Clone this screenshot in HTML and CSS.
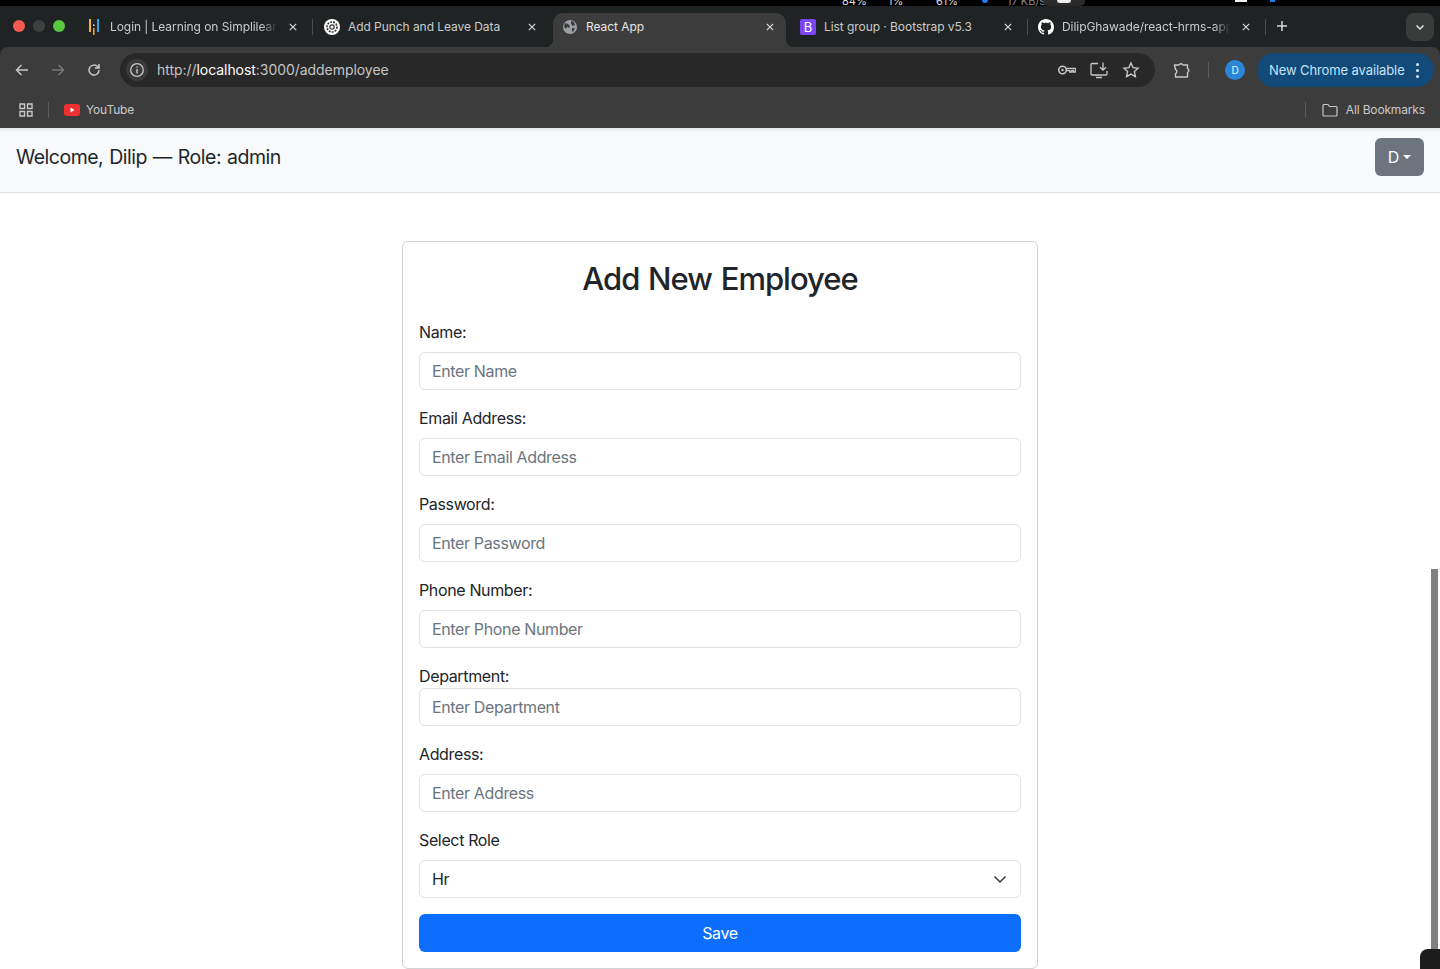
FILE: index.html
```html
<!DOCTYPE html>
<html lang="en">
<head>
    <meta charset="UTF-8">
    <meta name="viewport" content="width=device-width, initial-scale=1.0">
    <title>React App</title>
    <link rel="stylesheet" href="styles.css">
</head>
<body>
    <div class="menubar">
        <span class="mb-item mb-cpu">84%</span>
        <span class="mb-item mb-gpu">1%</span>
        <span class="mb-item mb-mem">61%</span>
        <span class="mb-dot"></span>
        <span class="mb-item mb-net">17 KB/s</span>
        <span class="mb-chip"><i></i></span>
        <span class="mb-bar"></span>
        <span class="mb-blue"></span>
    </div>

    <div class="chrome">
        <div class="tabstrip">
            <div class="traffic">
                <span class="light red"></span>
                <span class="light grey"></span>
                <span class="light green"></span>
            </div>
            <div class="tab tab-login">
                <svg class="favicon" viewBox="0 0 16 16"><rect x="3" y="0" width="2" height="13" fill="#f5b041"/><rect x="7" y="5.5" width="1.5" height="1.5" fill="#e8e8e8"/><rect x="7" y="9" width="1.5" height="7" fill="#f5a623"/><rect x="11" y="0" width="2" height="13" fill="#2ea3e0"/></svg>
                <span class="tab-title fade">Login | Learning on Simplilearn</span>
                <svg class="tab-close" viewBox="0 0 10 10"><path d="M1 1l8 8M9 1l-8 8"/></svg>
            </div>
            <span class="tab-sep"></span>
            <div class="tab tab-punch">
                <svg class="favicon" viewBox="0 0 16 16"><circle cx="8" cy="8" r="8" fill="#fff"/><circle cx="8" cy="8" r="5" fill="none" stroke="#333" stroke-width="1.6" stroke-dasharray="2 1"/><circle cx="8" cy="8" r="2.2" fill="none" stroke="#333" stroke-width="1.2"/></svg>
                <span class="tab-title">Add Punch and Leave Data</span>
                <svg class="tab-close" viewBox="0 0 10 10"><path d="M1 1l8 8M9 1l-8 8"/></svg>
            </div>
            <div class="tab tab-active">
                <svg class="favicon" viewBox="0 0 16 16"><circle cx="8" cy="8" r="7" fill="#9aa0a6"/><path d="M3 4l3 1 2 2-1 2-2-1-1 2-2-2z M9 2l3 1 1 3-2 1-2-2z M10 9l3 0-2 4-1-1z" fill="#3c3c3c"/></svg>
                <span class="tab-title">React App</span>
                <svg class="tab-close" viewBox="0 0 10 10"><path d="M1 1l8 8M9 1l-8 8"/></svg>
            </div>
            <div class="tab tab-bootstrap">
                <span class="favicon bs-icon">B</span>
                <span class="tab-title">List group · Bootstrap v5.3</span>
                <svg class="tab-close" viewBox="0 0 10 10"><path d="M1 1l8 8M9 1l-8 8"/></svg>
            </div>
            <span class="tab-sep"></span>
            <div class="tab tab-github">
                <svg class="favicon" viewBox="0 0 16 16"><path fill="#fff" d="M8 0C3.58 0 0 3.58 0 8c0 3.54 2.29 6.53 5.47 7.59.4.07.55-.17.55-.38 0-.19-.01-.82-.01-1.49-2.01.37-2.53-.49-2.69-.94-.09-.23-.48-.94-.82-1.13-.28-.15-.68-.52-.01-.53.63-.01 1.08.58 1.23.82.72 1.21 1.87.87 2.33.66.07-.52.28-.87.51-1.07-1.78-.2-3.64-.89-3.64-3.95 0-.87.31-1.59.82-2.15-.08-.2-.36-1.02.08-2.12 0 0 .67-.21 2.2.82.64-.18 1.32-.27 2-.27s1.36.09 2 .27c1.53-1.04 2.2-.82 2.2-.82.44 1.1.16 1.92.08 2.12.51.56.82 1.27.82 2.15 0 3.07-1.87 3.75-3.65 3.95.29.25.54.73.54 1.48 0 1.07-.01 1.93-.01 2.2 0 .21.15.46.55.38A8.01 8.01 0 0 0 16 8c0-4.42-3.58-8-8-8z"/></svg>
                <span class="tab-title fade">DilipGhawade/react-hrms-app</span>
                <svg class="tab-close" viewBox="0 0 10 10"><path d="M1 1l8 8M9 1l-8 8"/></svg>
            </div>
            <span class="tab-sep"></span>
            <span class="new-tab">
                <svg viewBox="0 0 12 12" width="12" height="12"><path d="M6 1v10M1 6h10" stroke="#d8d8d8" stroke-width="1.5"/></svg>
            </span>
            <span class="tab-menu">
                <svg viewBox="0 0 12 12" width="12" height="12"><path d="M2.5 4.5L6 8l3.5-3.5" fill="none" stroke="#e3e3e3" stroke-width="1.5"/></svg>
            </span>
        </div>

        <div class="toolbar">
            <svg class="nav-icon" viewBox="0 0 16 16"><path d="M14 8H3M7.5 3L2.5 8l5 5" fill="none" stroke="#c7c7c7" stroke-width="1.5"/></svg>
            <svg class="nav-icon" viewBox="0 0 16 16"><path d="M2 8h11M8.5 3l5 5-5 5" fill="none" stroke="#777" stroke-width="1.5"/></svg>
            <svg class="nav-icon" viewBox="0 0 16 16"><path d="M13 8a5 5 0 1 1-1.5-3.5L13 6M13 2v4H9" fill="none" stroke="#c7c7c7" stroke-width="1.5"/></svg>
            <div class="omnibox">
                <span class="site-info">
                    <svg viewBox="0 0 16 16" width="16" height="16"><circle cx="8" cy="8" r="6.3" fill="none" stroke="#c7c7c7" stroke-width="1.3"/><path d="M8 7v4.4M8 4.4v1.4" stroke="#c7c7c7" stroke-width="1.4"/></svg>
                </span>
                <span class="url"><span class="url-dim">http://</span>localhost<span class="url-dim">:3000/addemployee</span></span>
                <svg class="omni-icon" viewBox="0 0 20 20"><circle cx="5.5" cy="10" r="3.8" fill="none" stroke="#c7c7c7" stroke-width="1.5"/><circle cx="5.5" cy="10" r="1.2" fill="#c7c7c7"/><path d="M9.3 8.3h9v3.7h-2v-1.5h-1.5V12h-2v-1.5H9.3" fill="none" stroke="#c7c7c7" stroke-width="1.3"/></svg>
                <svg class="omni-icon" viewBox="0 0 20 20"><path d="M9 3.5H3a1 1 0 0 0-1 1v9.5a1 1 0 0 0 1 1h14a1 1 0 0 0 1-1v-3M7 17.5h6M14 2.5v7.5M11 7.2l3 3 3-3" fill="none" stroke="#c7c7c7" stroke-width="1.3"/></svg>
                <svg class="omni-icon" viewBox="0 0 20 20"><path d="M10 3l2.1 4.6 5 .6-3.7 3.4 1 5-4.4-2.5-4.4 2.5 1-5-3.7-3.4 5-.6z" fill="none" stroke="#c7c7c7" stroke-width="1.4"/></svg>
            </div>
            <svg class="ext-icon" viewBox="0 0 20 20"><path d="M2.5 5H7a2.2 2.2 0 0 1 4 0h4.5v3.5a2 2 0 0 1 0 3.8V17H3.5v-3.3a2.3 2.3 0 0 0 0-4.2z" fill="none" stroke="#c7c7c7" stroke-width="1.4" stroke-linejoin="round"/></svg>
            <span class="tool-sep"></span>
            <span class="avatar">D</span>
            <div class="update-pill">
                <span>New Chrome available</span>
                <span class="dots"><i></i><i></i><i></i></span>
            </div>
        </div>

        <div class="bookmarks">
            <svg class="apps" viewBox="0 0 14 14"><path d="M1 1h4.5v4.5H1zM8.5 1H13v4.5H8.5zM1 8.5h4.5V13H1zM8.5 8.5H13V13H8.5z" fill="none" stroke="#c7c7c7" stroke-width="1.4"/></svg>
            <span class="tool-sep bm-sep"></span>
            <svg class="yt" viewBox="0 0 16 12"><rect width="16" height="12" rx="3" fill="#ef3030"/><path d="M6.5 3.5v5l4-2.5z" fill="#fff"/></svg>
            <span class="bm-label">YouTube</span>
            <span class="bm-spacer"></span>
            <span class="tool-sep bm-sep bm-sep-end"></span>
            <svg class="folder" viewBox="0 0 16 14"><path d="M1 2.5a1 1 0 0 1 1-1h4l1.5 2H14a1 1 0 0 1 1 1V12a1 1 0 0 1-1 1H2a1 1 0 0 1-1-1z" fill="none" stroke="#c7c7c7" stroke-width="1.2"/></svg>
            <span class="bm-label">All Bookmarks</span>
        </div>
    </div>

    <nav class="navbar">
        <span class="brand">Welcome, Dilip — Role: admin</span>
        <button class="user-btn" type="button">D<span class="caret"></span></button>
    </nav>

    <main class="content">
        <form class="card">
            <h2>Add New Employee</h2>
            <div class="field">
                <label>Name:</label>
                <input type="text" placeholder="Enter Name">
            </div>
            <div class="field">
                <label>Email Address:</label>
                <input type="text" placeholder="Enter Email Address">
            </div>
            <div class="field">
                <label>Password:</label>
                <input type="text" placeholder="Enter Password">
            </div>
            <div class="field">
                <label>Phone Number:</label>
                <input type="text" placeholder="Enter Phone Number">
            </div>
            <div class="field tight">
                <label>Department:</label>
                <input type="text" placeholder="Enter Department">
            </div>
            <div class="field">
                <label>Address:</label>
                <input type="text" placeholder="Enter Address">
            </div>
            <div class="field">
                <label>Select Role</label>
                <div class="select-box">
                    <span>Hr</span>
                    <svg viewBox="0 0 16 16" width="16" height="16"><path d="M2.5 5.5L8 11l5.5-5.5" fill="none" stroke="#343a40" stroke-width="1.5"/></svg>
                </div>
            </div>
            <button class="save-btn" type="button">Save</button>
        </form>
    </main>

    <div class="scroll-thumb"></div>
    <div class="corner-chip"></div>
</body>
</html>
```

FILE: styles.css
```css
* {
    box-sizing: border-box;
}
body {
    margin: 0;
    height: 969px;
    overflow: hidden;
    background-color: #fff;
    color: #212529;
    font-family: Inter, "Liberation Sans", sans-serif;
    font-size: 16px;
    letter-spacing: -0.36px;
}

/* macOS menu bar, only its lower edge is in the picture */
.menubar {
    display: flex;
    align-items: flex-end;
    height: 6px;
    overflow: hidden;
    background-color: #000;
    color: #ddd;
    font-size: 11px;
    line-height: 9px;
    letter-spacing: 0;
}
.mb-item {
    flex: none;
}
.mb-cpu { margin-left: 842px; width: 25px; }
.mb-gpu { margin-left: 21px; width: 15px; }
.mb-mem { margin-left: 33px; width: 22px; }
.mb-dot {
    width: 6px;
    height: 3px;
    margin: 0 0 3px 24px;
    background-color: #1f7cf2;
    border-radius: 0 0 3px 3px;
}
.mb-net { margin-left: 19px; width: 30px; white-space: nowrap; color: #888; }
.mb-chip {
    display: flex;
    justify-content: center;
    width: 42px;
    height: 6px;
    margin-left: 6px;
    background-color: #2a2a2a;
    border-radius: 0 0 5px 5px;
}
.mb-chip i {
    width: 14px;
    height: 3px;
    background-color: #eee;
    border-radius: 0 0 5px 5px;
}
.mb-bar {
    width: 12px;
    height: 2px;
    margin: 0 0 4px 150px;
    background-color: #eee;
}
.mb-blue {
    width: 5px;
    height: 2px;
    margin: 0 0 4px 23px;
    background-color: #1f7cf2;
}

/* browser chrome */
.chrome {
    background-color: #202323;
}
.tabstrip {
    display: flex;
    align-items: flex-start;
    height: 41px;
    padding-top: 7px;
    color: #c9cbcc;
    font-size: 12px;
    letter-spacing: -0.06px;
}
.traffic {
    display: flex;
    gap: 8px;
    width: 80px;
    padding: 7px 0 0 13px;
}
.light {
    width: 12px;
    height: 12px;
    border-radius: 50%;
}
.red { background-color: #f25a52; }
.grey { background-color: #3f4141; }
.green { background-color: #58c83e; }
.tab {
    display: flex;
    align-items: center;
    height: 28px;
    flex: none;
    gap: 8px;
    line-height: 26px;
}
.tab-login { width: 232px; padding: 0 11px 0 6px; }
.tab-punch { width: 240px; padding: 0 13px 0 11px; }
.tab-active {
    position: relative;
    width: 233px;
    height: 34px;
    padding: 0 8px 6px 9px;
    background-color: #3c3c3c;
    border-radius: 10px 10px 0 0;
    color: #e6e6e6;
}
.tab-active::before, .tab-active::after {
    content: "";
    position: absolute;
    bottom: 0;
    width: 8px;
    height: 8px;
}
.tab-active::before {
    left: -8px;
    background: radial-gradient(circle at 0 0, transparent 8px, #3c3c3c 8.5px);
}
.tab-active::after {
    right: -8px;
    background: radial-gradient(circle at 100% 0, transparent 8px, #3c3c3c 8.5px);
}
.tab-bootstrap { width: 241px; padding: 0 11px 0 14px; }
.tab-github { width: 237px; padding: 0 11px 0 10px; }
.favicon {
    width: 16px;
    height: 16px;
    flex: none;
}
.bs-icon {
    background-color: #7b46f1;
    border-radius: 2px;
    color: #fff;
    text-align: center;
    font-size: 13px;
    line-height: 16px;
}
.tab-title {
    flex: 1;
    overflow: hidden;
    white-space: nowrap;
}
.fade {
    -webkit-mask-image: linear-gradient(to left, transparent 0, #000 16px);
    mask-image: linear-gradient(to left, transparent 0, #000 16px);
}
.tab-close {
    width: 16px;
    height: 8px;
    flex: none;
    fill: none;
    stroke: #d8d8d8;
    stroke-width: 1.5;
}
.tab-sep {
    width: 1px;
    height: 16px;
    margin-top: 6px;
    flex: none;
    background-color: #4b4d4d;
}
.new-tab {
    display: flex;
    align-items: center;
    justify-content: center;
    width: 32px;
    height: 26px;
    flex: none;
}
.tab-menu {
    display: flex;
    align-items: center;
    justify-content: center;
    width: 28px;
    height: 28px;
    margin-left: auto;
    margin-right: 6px;
    background-color: #3a3c3c;
    border-radius: 8px;
}
.toolbar {
    display: flex;
    align-items: center;
    height: 40px;
    padding: 6px 6px 0 14px;
    background-color: #3c3c3c;
    border-radius: 8px 8px 0 0;
    letter-spacing: 0;
}
.nav-icon {
    width: 16px;
    height: 16px;
    margin-right: 20px;
    flex: none;
}
.omnibox {
    display: flex;
    align-items: center;
    width: 1035px;
    height: 34px;
    margin-left: -2px;
    padding: 0 14px 0 6px;
    background-color: #282828;
    border-radius: 17px;
}
.site-info {
    display: flex;
    align-items: center;
    justify-content: center;
    width: 22px;
    height: 22px;
    background-color: #3a3a3a;
    border-radius: 50%;
    margin-right: 9px;
}
.url {
    flex: 1;
    padding-bottom: 1px;
    font-size: 14px;
    letter-spacing: -0.05px;
    color: #fff;
}
.url-dim { color: #c4c4c4; }
.omni-icon {
    width: 20px;
    height: 20px;
    margin-left: 12px;
    flex: none;
}
.ext-icon {
    width: 20px;
    height: 20px;
    margin-left: 17px;
    flex: none;
}
.tool-sep {
    width: 1px;
    height: 16px;
    margin: 0 16px;
    background-color: #5c5c5c;
    flex: none;
}
.avatar {
    display: flex;
    align-items: center;
    justify-content: center;
    width: 20px;
    height: 20px;
    background-color: #2a86d6;
    border-radius: 50%;
    color: #e8f2fb;
    font-size: 10px;
    flex: none;
}
.update-pill {
    display: flex;
    align-items: center;
    justify-content: space-between;
    width: 177px;
    height: 34px;
    margin-left: 12px;
    padding: 0 15px 0 12px;
    background-color: #124a79;
    border-radius: 17px;
    color: #c5e2f7;
    font-size: 13px;
    letter-spacing: -0.1px;
    flex: none;
}
.dots {
    display: flex;
    flex-direction: column;
    gap: 3px;
}
.dots i {
    width: 3px;
    height: 3px;
    background-color: #d7e9f7;
    border-radius: 50%;
}
.bookmarks {
    display: flex;
    align-items: center;
    height: 41px;
    padding: 4px 15px 0 19px;
    background-color: #3c3c3c;
    color: #c9c9c9;
    font-size: 12px;
    letter-spacing: -0.15px;
}
.apps {
    width: 14px;
    height: 14px;
    flex: none;
}
.bm-sep {
    margin: 0 15px;
}
.bm-sep-end {
    margin-right: 16px;
}
.yt {
    width: 16px;
    height: 12px;
    margin-right: 6px;
    flex: none;
}
.bm-spacer {
    flex: 1;
}
.folder {
    width: 16px;
    height: 14px;
    margin-right: 8px;
    flex: none;
}

/* page */
.navbar {
    display: flex;
    align-items: flex-start;
    justify-content: space-between;
    height: 65px;
    padding: 10px 16px 0;
    background-color: #f8f9fa;
    border-bottom: 1px solid #dee2e6;
    box-shadow: inset 0 6px 5px -5px rgba(0, 0, 0, 0.12);
}
.brand {
    font-size: 19.5px;
    line-height: 38px;
    letter-spacing: -0.5px;
    word-spacing: 1px;
}
.user-btn {
    display: flex;
    align-items: center;
    justify-content: center;
    width: 49px;
    height: 38px;
    padding: 0;
    background-color: #6c757d;
    border: none;
    border-radius: 6px;
    color: #fff;
    font-family: inherit;
    font-size: 16px;
}
.caret {
    margin-left: 4px;
    border-top: 4.8px solid #fff;
    border-left: 4.8px solid transparent;
    border-right: 4.8px solid transparent;
}
.content {
    display: flex;
    justify-content: center;
    padding-top: 48px;
}
.card {
    width: 636px;
    padding: 16px;
    background-color: #fff;
    border: 1px solid #d0d2d4;
    border-radius: 6px;
}
.card h2 {
    margin: 0 0 20px;
    text-align: center;
    font-size: 31px;
    font-weight: 500;
    line-height: 42px;
    letter-spacing: -1px;
    word-spacing: 1.5px;
}
.field {
    margin-bottom: 16px;
}
.field label {
    display: block;
    margin-bottom: 8px;
    line-height: 24px;
}
.field.tight label {
    margin-bottom: 0;
}
.field input, .select-box {
    display: flex;
    align-items: center;
    width: 100%;
    height: 38px;
    padding: 0 12px;
    background-color: #fff;
    border: 1px solid #dee2e6;
    border-radius: 6px;
    color: #212529;
    font-family: inherit;
    font-size: 16px;
    letter-spacing: inherit;
}
.field input::placeholder {
    color: #6c757d;
    opacity: 1;
}
.select-box {
    justify-content: space-between;
}
.save-btn {
    display: block;
    width: 100%;
    height: 38px;
    background-color: #0d6efd;
    border: none;
    border-radius: 6px;
    color: #fff;
    font-family: inherit;
    font-size: 16px;
    letter-spacing: inherit;
}
.scroll-thumb {
    position: absolute;
    top: 569px;
    left: 1431px;
    width: 7px;
    height: 400px;
    background-color: #808080;
}
.corner-chip {
    position: absolute;
    top: 949px;
    left: 1420px;
    width: 20px;
    height: 20px;
    background-color: #1c1c1c;
    border-radius: 8px 0 0 0;
}
```
